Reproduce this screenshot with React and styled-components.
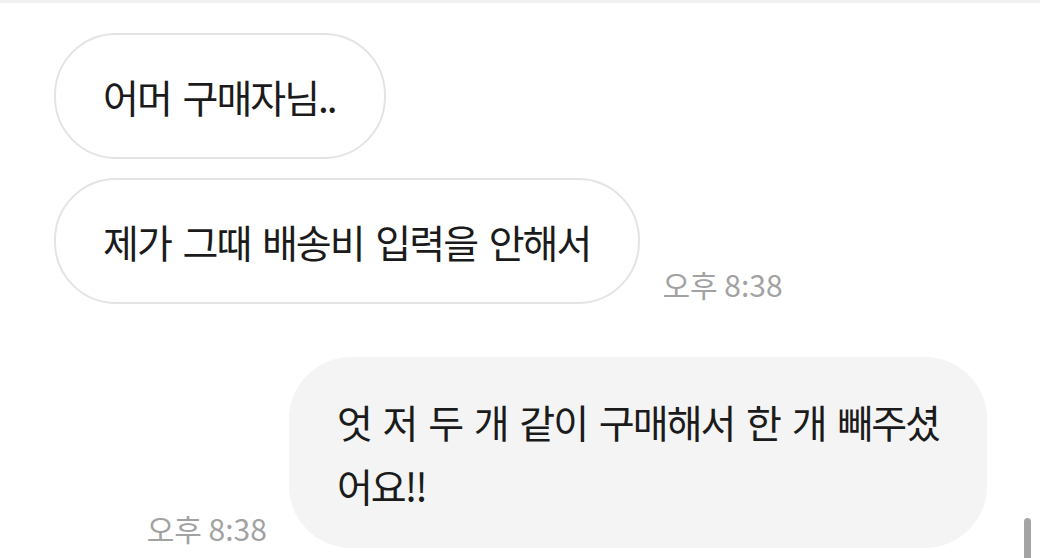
import React from "react";
import styled, { createGlobalStyle } from "styled-components";

const GlobalStyle = createGlobalStyle`
    html, body {
        margin: 0;
        padding: 0;
        background: #ffffff;
        overflow: hidden;
    }
    body {
        font-family: "Noto Sans CJK KR", "Noto Sans", sans-serif;
    }
`

const Screen = styled.div`
    position: relative;
    width: 1040px;
    height: 558px;
    overflow: hidden;
    border-top: 3px solid #f0f0f0;
    box-sizing: border-box;
`

const Messages = styled.div`
    display: flex;
    flex-direction: column;
    padding: 30px 53px 0 54px;
`

const Row = styled.div`
    display: flex;
    align-items: flex-end;
    justify-content: ${props => props.$mine ? "flex-end" : "flex-start"};
    gap: 22px;
    margin-top: ${props => props.$gap || 0}px;
`

const Bubble = styled.div`
    box-sizing: border-box;
    padding: ${props => props.$mine ? "32px 48px 31px" : "29px 48px 29px 47px"};
    border-radius: 62px;
    border: ${props => props.$mine ? "none" : "2px solid #e4e4e4"};
    background: ${props => props.$mine ? "#f4f4f4" : "#ffffff"};
    color: #1b1b1b;
    font-size: 39px;
    line-height: 64px;
    letter-spacing: -2px;
    word-spacing: 5px;
    white-space: nowrap;
`

const Time = styled.span`
    flex-shrink: 0;
    color: #a2a2a2;
    font-size: 30px;
    line-height: 1;
    margin-bottom: 5px;
`

const ScrollThumb = styled.div`
    position: absolute;
    right: 9px;
    top: 515px;
    width: 7px;
    height: 60px;
    border-radius: 4px;
    background: #a4a4a4;
`

export default function App(){
    return(
        <Screen>
            <GlobalStyle/>
            <Messages>
                <Row>
                    <Bubble>어머 구매자님..</Bubble>
                </Row>
                <Row $gap={19}>
                    <Bubble>제가 그때 배송비 입력을 안해서</Bubble>
                    <Time>오후 8:38</Time>
                </Row>
                <Row $mine $gap={53}>
                    <Time>오후 8:38</Time>
                    <Bubble $mine>엇 저 두 개 같이 구매해서 한 개 빼주셨<br/>어요!!</Bubble>
                </Row>
            </Messages>
            <ScrollThumb/>
        </Screen>
    )
}
